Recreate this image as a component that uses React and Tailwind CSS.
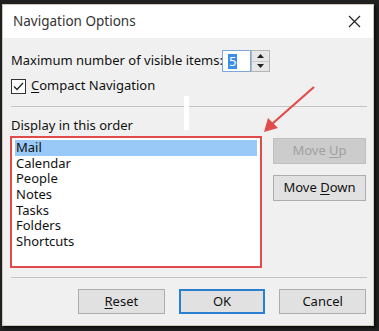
import React from "react";

const font = { fontFamily: '"Noto Sans", "Open Sans", sans-serif' };

function Btn({ children, className = "" }) {
  return (
    <div
      className={`flex items-center justify-center bg-[#e1e1e1] border border-[#adadad] text-[13px] text-[#111] ${className}`}
    >
      {children}
    </div>
  );
}

export default function App() {
  const items = ["Mail", "Calendar", "People", "Notes", "Tasks", "Folders", "Shortcuts"];
  return (
    <div
      className="relative w-[379px] h-[331px] bg-[#202020] overflow-hidden pt-[4px] pl-[2px]"
      style={font}
    >
      <div className="w-[372px] h-[322px] bg-[#f0f0f0] border border-[#cfc6ba] flex flex-col shadow-[2px_2px_2px_rgba(0,0,0,0.6)]">
        {/* title bar */}
        <div className="h-[33px] bg-white flex items-center justify-between pl-[10px] pr-[8px]">
          <span className="text-[13.5px] text-[#333] whitespace-nowrap">Navigation Options</span>
          <svg width="13" height="13" viewBox="0 0 13 13" className="mr-[4px]">
            <path d="M1 1 L12 12 M12 1 L1 12" stroke="#222" strokeWidth="1.2" />
          </svg>
        </div>

        <div className="flex-1 flex flex-col px-[7px]">
          {/* max items row */}
          <div className="flex items-center mt-[12px] h-[22px]">
            <span className="text-[13px] text-[#111] w-[212px] pl-[1px] whitespace-nowrap">
              Maximum number of visible items:
            </span>
            <div className="w-[29px] h-[22px] bg-white border border-[#7aa7dc] flex items-center pl-[5px]">
              <span className="bg-[#3a8ee6] text-white text-[13px] leading-[15px] px-[1px]">5</span>
            </div>
            <div className="w-[19px] h-[22px] bg-[#e6e6e6] border border-[#b5b5b5] flex flex-col">
              <div className="flex-1 flex items-center justify-center border-b border-[#c8c8c8]">
                <svg width="7" height="4" viewBox="0 0 7 4">
                  <path d="M0 4 L3.5 0 L7 4 Z" fill="#222" />
                </svg>
              </div>
              <div className="flex-1 flex items-center justify-center">
                <svg width="7" height="4" viewBox="0 0 7 4">
                  <path d="M0 0 L7 0 L3.5 4 Z" fill="#222" />
                </svg>
              </div>
            </div>
          </div>

          {/* checkbox row */}
          <div className="flex items-center mt-[6px] h-[16px] pl-[1px]">
            <div className="w-[15px] h-[15px] border border-[#333] bg-white flex items-center justify-center">
              <svg width="11" height="9" viewBox="0 0 11 9">
                <path d="M1 4.5 L4 7.5 L10 1" stroke="#222" strokeWidth="1.3" fill="none" />
              </svg>
            </div>
            <span className="ml-[5px] text-[13px] text-[#111] whitespace-nowrap">
              <u className="underline-offset-2">C</u>ompact Navigation
            </span>
          </div>

          {/* separator */}
          <div className="mt-[12px] h-px bg-[#c4c4c4] ml-[1px] mr-[-1px]" />

          <div className="mt-[10px] text-[13px] text-[#111] pl-[1px] leading-[16px]">
            Display in this order
          </div>

          {/* list + buttons */}
          <div className="flex mt-[3px]">
            <div className="w-[253px] h-[132px] border-2 border-[#e24b4b] bg-white p-[1px]">
              <div className="flex flex-col pt-[1px] pl-[2px] pr-[2px]">
                {items.map((it, i) => (
                  <div
                    key={it}
                    className={`h-[15.6px] flex items-center pl-[1px] text-[13px] leading-[15px] text-[#111] ${
                      i === 0 ? "bg-[#99c9f7]" : ""
                    }`}
                  >
                    {it}
                  </div>
                ))}
              </div>
            </div>
            <div className="flex flex-col ml-[11px] mt-[2px]">
              <div className="w-[93px] h-[26px] flex items-center justify-center bg-[#cccccc] border border-[#bfbfbf] text-[13px] text-[#a0a0a0] whitespace-nowrap">
                Move&nbsp;<u className="underline-offset-2">U</u>p
              </div>
              <Btn className="w-[93px] h-[26px] mt-[11px] whitespace-nowrap">
                Move&nbsp;<u className="underline-offset-2">D</u>own
              </Btn>
            </div>
          </div>

          {/* bottom separator */}
          <div className="mt-[9px] h-px bg-[#c4c4c4] ml-[1px] mr-[-1px]" />

          <div className="flex mt-[11px] pl-[68px] gap-[14px]">
            <Btn className="w-[87px] h-[25px]">
              <u className="underline-offset-2">R</u>eset
            </Btn>
            <Btn className="w-[87px] h-[25px] !border-2 !border-[#2a7fd0]">OK</Btn>
            <Btn className="w-[87px] h-[25px]">Cancel</Btn>
          </div>
        </div>
      </div>

      {/* white artifact bar */}
      <div className="absolute left-[184px] top-[96px] w-[5px] h-[34px] bg-white" />

      {/* red arrow */}
      <svg className="absolute left-0 top-0" width="379" height="331" viewBox="0 0 379 331">
        <line x1="314" y1="87" x2="272" y2="124" stroke="#e24b4b" strokeWidth="2.2" />
        <path d="M264 132 L268 118 L278 128 Z" fill="#e24b4b" />
      </svg>
    </div>
  );
}
